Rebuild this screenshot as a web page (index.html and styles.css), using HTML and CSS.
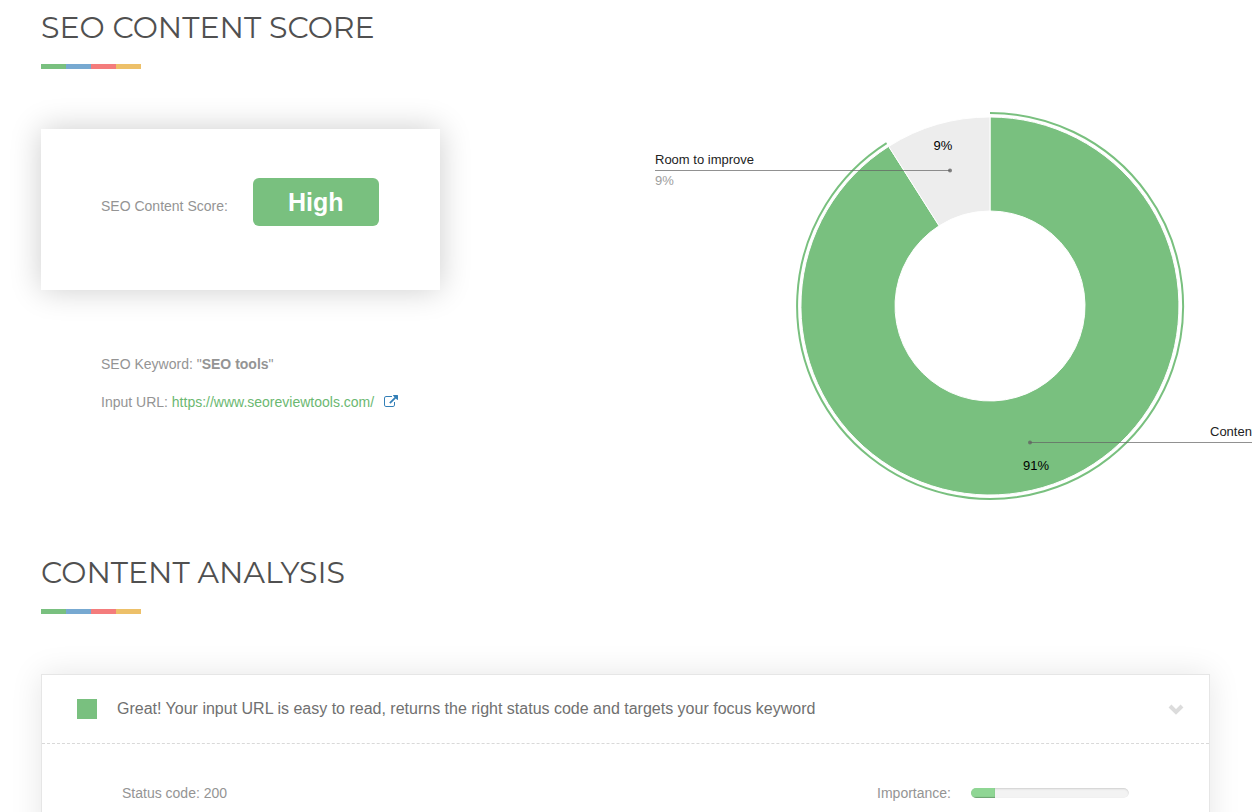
FILE: index.html
```html
<!DOCTYPE html>
<html lang="en">
  <head>
    <meta charset="utf-8">
    <title>SEO Content Score</title>
    <link rel="stylesheet" href="styles.css">
  </head>
  <body>
    <section class="section">
      <h2>SEO CONTENT SCORE</h2>
      <div class="divider"></div>
      <div class="score-row">
        <div class="score-col">
          <div class="score-card">
            <span>SEO Content Score:</span>
            <strong class="badge">High</strong>
          </div>
          <div class="details">
            <p>SEO Keyword: "<b>SEO tools</b>"</p>
            <p>
              Input URL: <a href="https://www.seoreviewtools.com/">https://www.seoreviewtools.com/</a>
              <a class="external" href="https://www.seoreviewtools.com/" target="_blank" aria-label="Open in new tab">
                <svg width="14" height="14" viewBox="0 0 1792 1792" fill="currentColor"><path d="M1408 928v320q0 119-84.5 203.5t-203.5 84.5h-832q-119 0-203.5-84.5t-84.5-203.5v-832q0-119 84.5-203.5t203.5-84.5h704q14 0 23 9t9 23v64q0 14-9 23t-23 9h-704q-66 0-113 47t-47 113v832q0 66 47 113t113 47h832q66 0 113-47t47-113v-320q0-14 9-23t23-9h64q14 0 23 9t9 23zm384-864v512q0 26-19 45t-45 19-45-19l-176-176-652 652q-10 10-23 10t-23-10l-114-114q-10-10-10-23t10-23l652-652-176-176q-19-19-19-45t19-45 45-19h512q26 0 45 19t19 45z"/></svg>
              </a>
            </p>
          </div>
        </div>
        <div class="chart">
          <svg width="597" height="420" viewBox="0 0 597 420">
            <!-- slices -->
            <path class="slice-content" d="M335 28A189 189 0 1 1 233.7 57.4L284.1 136.8A95 95 0 1 0 335 122Z"/>
            <path class="slice-room" d="M233.7 57.4A189 189 0 0 1 335 28V122A95 95 0 0 0 284.1 136.8Z"/>
            <path class="ring" d="M335 24A193 193 0 1 1 231.6 54.1"/>
            <text class="value" x="288" y="61">9%</text>
            <text class="value" x="381" y="381">91%</text>
            <!-- labels -->
            <path class="leader" d="M0 81.5H295M375 353.5H597"/>
            <circle class="dot" cx="295" cy="81.5" r="2"/>
            <circle class="dot" cx="375" cy="353.5" r="2"/>
            <text class="label" x="0" y="75">Room to improve</text>
            <text class="label label-percent" x="0" y="96">9%</text>
            <text class="label" x="555" y="347">Content</text>
          </svg>
        </div>
      </div>
    </section>

    <section class="section">
      <h2>CONTENT ANALYSIS</h2>
      <div class="divider"></div>
      <div class="panel">
        <button class="panel-header" type="button">
          <span class="status"></span>
          <span class="panel-title">Great! Your input URL is easy to read, returns the right status code and targets your focus keyword</span>
          <svg width="16" height="12" viewBox="0 0 16 12"><path class="chevron" d="M2 3L8 9L14 3"/></svg>
        </button>
        <div class="panel-row">
          <span>Status code: 200</span>
          <div class="importance">
            <label for="importance">Importance:</label>
            <progress id="importance" value="15" max="100"></progress>
          </div>
        </div>
      </div>
    </section>
  </body>
</html>
```
FILE: styles.css
```css
* {
  box-sizing: border-box;
}
body {
  margin: 0;
  padding: 8px 42px 0 41px;
  overflow-x: hidden;
  background: #fff;
  font-family: Arial, "Liberation Sans", sans-serif;
  font-size: 14px;
  line-height: 20px;
  color: #949494;
}
.section {
  margin-bottom: 44px;
}
h2 {
  margin: 0 0 16px;
  font-family: Montserrat, Inter, sans-serif;
  font-size: 30px;
  font-weight: 400;
  line-height: 40px;
  color: #505050;
}
.divider {
  width: 100px;
  height: 5px;
  background: linear-gradient(to right, #79c07f 25%, #77a9d1 25% 50%, #f47c7c 50% 75%, #edc069 75%);
}
.score-row {
  display: flex;
  justify-content: space-between;
  margin: 20px -42px 0 0;
}
.score-col {
  padding-top: 40px;
}
.score-card {
  display: flex;
  align-items: baseline;
  gap: 25px;
  padding: 49px 61px 64px 60px;
  background: #fff;
  box-shadow: 0 0 30px rgba(0, 0, 0, 0.2);
}
.badge {
  width: 126px;
  border-radius: 6px;
  background: #79c07f;
  color: #fff;
  font-size: 25px;
  line-height: 48px;
  text-align: center;
}
.details {
  padding: 64px 0 0 60px;
}
.details p {
  margin: 0 0 18px;
}
a {
  color: #6bb871;
  text-decoration: none;
}
.external {
  margin-left: 6px;
  color: #337fb7;
}
.external svg {
  vertical-align: -2px;
}
.chart svg {
  display: block;
}
.slice-content {
  fill: #79c07f;
  stroke: #fff;
}
.slice-room {
  fill: #ededed;
  stroke: #fff;
}
.ring {
  fill: none;
  stroke: #79c07f;
  stroke-width: 2;
}
.leader {
  fill: none;
  stroke: #636363;
  stroke-opacity: 0.7;
}
.dot {
  fill: #636363;
  fill-opacity: 0.8;
}
.value {
  fill: #000;
  font-size: 13px;
  text-anchor: middle;
}
.label {
  fill: #222;
  font-size: 13px;
}
.label-percent {
  fill: #9e9e9e;
}
.panel {
  margin-top: 60px;
  border: 1px solid #e6e6e6;
  background: #fff;
  box-shadow: 0 0 30px rgba(0, 0, 0, 0.1);
}
.panel-header {
  display: flex;
  align-items: center;
  width: 100%;
  padding: 24px 25px 24px 35px;
  border: none;
  border-bottom: 1px dashed #d9d9d9;
  background: none;
  color: #707070;
  font: inherit;
  font-size: 16px;
  text-align: left;
  cursor: pointer;
}
.status {
  width: 20px;
  height: 20px;
  margin-right: 20px;
  background: #79c07f;
}
.panel-title {
  flex: 1;
}
.chevron {
  fill: none;
  stroke: #dcdcdc;
  stroke-width: 4;
}
.panel-row {
  display: flex;
  justify-content: space-between;
  padding: 39px 80px;
}
.importance {
  display: flex;
  align-items: center;
  gap: 20px;
}
progress {
  width: 158px;
  height: 10px;
  appearance: none;
  border: none;
  border-radius: 5px;
  overflow: hidden;
}
progress::-webkit-progress-bar {
  border-radius: 5px;
  background: #f3f3f3;
  box-shadow: inset 0 1px 2px rgba(0, 0, 0, 0.15);
}
progress::-webkit-progress-value {
  background: #8fd694;
  box-shadow: inset 0 -1px 1px rgba(0, 0, 0, 0.25);
}
```
